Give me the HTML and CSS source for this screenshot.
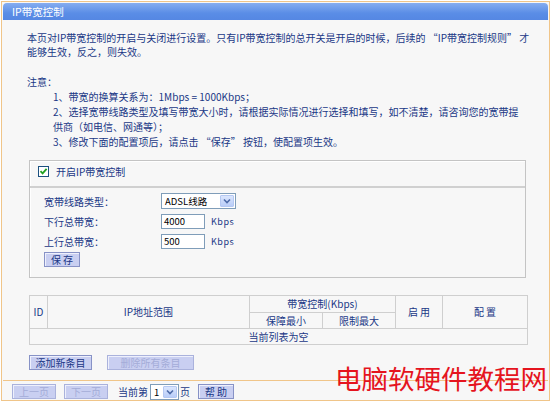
FILE: index.html
```html
<!DOCTYPE html>
<html lang="zh-CN">
<head>
<meta charset="utf-8">
<title>IP带宽控制</title>
<link rel="stylesheet" href="styles.css">
</head>
<body>
<div class="frame">
  <div class="titlebar">IP带宽控制</div>
  <div class="content">
    <p class="intro">本页对IP带宽控制的开启与关闭进行设置。只有IP带宽控制的总开关是开启的时候，后续的 “IP带宽控制规则” 才<br>能够生效，反之，则失效。</p>
    <p class="note-title">注意：</p>
    <div class="notes">
      <div>1、带宽的换算关系为：1Mbps = 1000Kbps；</div>
      <div>2、选择宽带线路类型及填写带宽大小时，请根据实际情况进行选择和填写，如不清楚，请咨询您的宽带提</div>
      <div>供商（如电信、网通等）；</div>
      <div>3、修改下面的配置项后，请点击 “保存” 按钮，使配置项生效。</div>
    </div>

    <div class="panel">
      <div class="panel-head">
        <span class="checkbox"><svg width="9" height="9" viewBox="0 0 9 9"><path d="M1.5 4.2 L3.6 6.4 L7.6 1.8" fill="none" stroke="#21a121" stroke-width="1.8"/></svg></span>
        <span>开启IP带宽控制</span>
      </div>
      <div class="panel-body">
        <div class="row">
          <span class="label">宽带线路类型：</span>
          <span class="select wide"><span class="sel-text">ADSL线路</span><span class="sel-arrow"><svg width="8" height="6" viewBox="0 0 8 6"><path d="M1 1.5 L4 4.5 L7 1.5" fill="none" stroke="#4d6aa8" stroke-width="1.6"/></svg></span></span>
        </div>
        <div class="row">
          <span class="label">下行总带宽：</span>
          <span class="input">4000</span>
          <span class="unit">Kbps</span>
        </div>
        <div class="row">
          <span class="label">上行总带宽：</span>
          <span class="input">500</span>
          <span class="unit">Kbps</span>
        </div>
        <button class="btn save">保 存</button>
      </div>
    </div>

    <table class="rules">
      <colgroup>
        <col class="c-id"><col class="c-ip"><col class="c-min"><col class="c-max"><col class="c-en"><col class="c-cfg">
      </colgroup>
      <tr class="h1">
        <th rowspan="2">ID</th>
        <th rowspan="2">IP地址范围</th>
        <th colspan="2">带宽控制(Kbps)</th>
        <th rowspan="2">启 用</th>
        <th rowspan="2">配 置</th>
      </tr>
      <tr class="h2">
        <th>保障最小</th>
        <th>限制最大</th>
      </tr>
      <tr class="empty">
        <td colspan="6">当前列表为空</td>
      </tr>
    </table>

    <div class="actions">
      <button class="btn add">添加新条目</button>
      <button class="btn del disabled">删除所有条目</button>
    </div>
  </div>
  <div class="footer">
    <button class="btn pg disabled">上一页</button>
    <button class="btn pg disabled">下一页</button>
    <span class="cur">当前第</span>
    <span class="select small"><span class="sel-text">1</span><span class="sel-arrow"><svg width="8" height="6" viewBox="0 0 8 6"><path d="M1 1.5 L4 4.5 L7 1.5" fill="none" stroke="#4d6aa8" stroke-width="1.6"/></svg></span></span>
    <span class="page">页</span>
    <button class="btn help">帮 助</button>
  </div>
  <div class="watermark">电脑软硬件教程网</div>
</div>
</body>
</html>
```

FILE: styles.css
```css
* { box-sizing: border-box; }
html, body { margin: 0; padding: 0; background: #ffffff; }
body {
  font-family: "Noto Sans CJK SC", "Noto Sans", sans-serif;
  font-size: 10px;
  color: #1a3786;
}
.frame {
  position: relative;
  margin: 1px 0 0 1px;
  width: 549px;
  height: 400px;
  border: 1px solid #f0c589;
  background: #f7f7f7;
  padding: 1px 1px 0 1px;
  display: flex;
  flex-direction: column;
  overflow: hidden;
}
.titlebar {
  height: 17px;
  line-height: 17px;
  padding-left: 9px;
  color: #ffffff;
  font-size: 10.5px;
  background: linear-gradient(#86adf0, #5a8de6 60%, #5587e3);
  border-radius: 4px 4px 0 0;
}
.content {
  flex: 1;
  padding: 0 22px 0 24px;
}
.intro {
  margin: 11px 0 0 0;
  line-height: 14px;
  white-space: nowrap;
}
.note-title {
  margin: 16px 0 0 0;
  line-height: 14px;
}
.notes {
  padding-left: 26px;
  line-height: 15px;
  white-space: nowrap;
}
.panel {
  margin: 11px 0 0 2px;
  height: 118px;
  border: 1px solid #c4c4c4;
  box-shadow: inset 1px 1px 0 #ffffff;
}
.panel-head {
  height: 27px;
  border-bottom: 2px solid #d0d0d0;
  display: flex;
  align-items: flex-start;
  padding: 5px 0 0 8px;
  line-height: 12px;
  gap: 7px;
}
.checkbox {
  width: 11px;
  height: 11px;
  border: 1px solid #1c5180;
  background: #ffffff;
  display: inline-flex;
  align-items: center;
  justify-content: center;
}
.checkbox svg { display: block; }
.panel-body {
  padding: 3px 0 0 14px;
}
.row {
  height: 20px;
  display: flex;
  align-items: center;
}
.label {
  width: 117px;
}
.select {
  display: inline-flex;
  align-items: center;
  justify-content: space-between;
  height: 16px;
  border: 1px solid #7f9db9;
  background: #ffffff;
  padding: 0 1px 0 3px;
  font-size: 9.5px;
  color: #000000;
}
.select.wide { width: 75px; }
.select.small { width: 29px; height: 16px; }
.sel-arrow {
  width: 14px;
  height: 12px;
  background: linear-gradient(#dbe6fd, #b9cdf8);
  border: 1px solid #b5c8f2;
  border-radius: 1px;
  display: inline-flex;
  align-items: center;
  justify-content: center;
}
.sel-arrow svg { display: block; }
.input {
  display: inline-block;
  width: 44px;
  height: 15px;
  line-height: 13px;
  border: 1px solid #7f9db9;
  background: #ffffff;
  padding-left: 2px;
  color: #000000;
  font-size: 9.5px;
}
.unit {
  margin-left: 6px;
  font-size: 9px;
  letter-spacing: 0.5px;
}
.btn {
  font-family: inherit;
  font-size: 10px;
  color: #1a3786;
  background: #c9cff1;
  border: 1px solid #8792c6;
  box-shadow: inset 1px 1px 0 #eef0fc;
  height: 15px;
  line-height: 12px;
  padding: 0;
  margin: 0;
}
.btn.disabled {
  color: #a4acd8;
  border-color: #aab2dc;
}
.save {
  width: 36px;
  margin-top: 1px;
}
.rules {
  margin: 17px 0 0 2px;
  width: 498px;
  border-collapse: collapse;
  table-layout: fixed;
  border: 1px solid #c2c2c2;
}
.rules th, .rules td {
  border: 1px solid #cfcfcf;
  font-weight: normal;
  text-align: center;
  padding: 0;
  line-height: 14px;
}
.c-id { width: 18px; }
.c-ip { width: 202px; }
.c-min { width: 73px; }
.c-max { width: 73px; }
.c-en { width: 47px; }
.c-cfg { width: 85px; }
.rules .h1 th { height: 17px; }
.rules .h2 th { height: 16px; }
.rules .empty td { height: 16px; }
.rules th[rowspan] { vertical-align: middle; }
.actions {
  margin: 10px 0 0 2px;
  display: flex;
  gap: 15px;
}
.add { width: 63px; }
.del { width: 87px; }
.footer {
  height: 20px;
  border-top: 1px solid #f0c589;
  display: flex;
  align-items: flex-start;
  padding: 3px 0 0 9px;
}
.pg { width: 44px; margin-right: 8px; }
.cur { margin-left: 2px; line-height: 15px; }
.footer .select { margin-left: 2px; }
.page { line-height: 15px; margin-left: 1px; }
.help { width: 36px; margin-left: 8px; }
.watermark {
  position: absolute;
  right: 2px;
  bottom: 6px;
  font-size: 26.5px;
  line-height: 32px;
  color: #e5141e;
  letter-spacing: 0;
}
```
